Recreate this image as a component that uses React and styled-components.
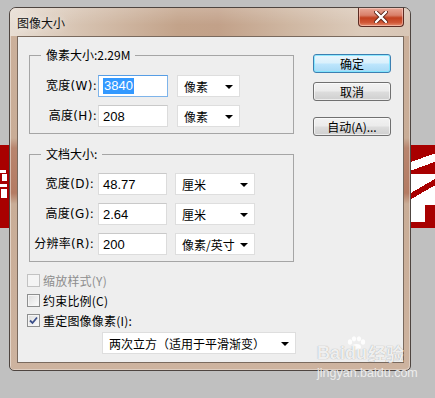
import React from "react";
import styled, { createGlobalStyle } from "styled-components";

const Global = createGlobalStyle`
  html, body { margin: 0; padding: 0; }
  body { font-family: "Noto Sans CJK SC", "Liberation Sans", sans-serif; }
  * { box-sizing: border-box; }
`;

const Page = styled.div`
  position: relative;
  width: 435px;
  height: 398px;
  overflow: hidden;
  padding: 7px 0 0 9px;
  background:
    linear-gradient(#fff, #fff) 0 170px / 6px 3px no-repeat,
    linear-gradient(#fff, #fff) 2px 174px / 5px 7px no-repeat,
    linear-gradient(#fff, #fff) 0 184px / 7px 3px no-repeat,
    linear-gradient(#fff, #fff) 1px 189px / 6px 9px no-repeat,
    linear-gradient(160deg, transparent 30%, #fff 30%, #fff 62%, transparent 62%) 411px 154px / 24px 18px no-repeat,
    linear-gradient(150deg, #fff 0 42%, transparent 42% 56%, #fff 56%) 411px 174px / 24px 31px no-repeat,
    linear-gradient(#fff, #fff) 411px 205px / 14px 17px no-repeat,
    linear-gradient(to bottom, #c0c0c0 145px, #a80000 145px, #a80000 228px, #c0c0c0 228px);
  font-family: "Noto Sans CJK SC", "Liberation Sans", sans-serif;
  font-size: 12px;
  color: #000;
`;

const Window = styled.div`
  width: 402px;
  height: 364px;
  border: 1px solid #4e4540;
  border-radius: 7px 7px 5px 5px;
  overflow: hidden;
  display: flex;
  flex-direction: column;
  background: linear-gradient(to bottom, #ccb19c 0, #c9ad97 130px, #b8856e 140px, #b47b63 185px, #c9ad97 196px, #cdb39f 100%);
  box-shadow: inset 1px 1px 0 rgba(255,255,255,0.45), inset -1px -1px 0 rgba(255,255,255,0.35);
`;

const TitleBar = styled.div`
  height: 28px;
  flex: none;
  display: flex;
  align-items: flex-start;
  justify-content: space-between;
  padding: 0 6px 0 7px;
  background:
    linear-gradient(to bottom, rgba(255,255,255,0.18), rgba(255,255,255,0) 60%),
    linear-gradient(90deg, #e8ded4 0%, #d6c2b0 18%, #c3a38a 42%, #c2a189 52%, #cfb7a2 70%, #dccbbb 88%, #d8c6b6 100%);
`;

const Title = styled.span`
  margin-top: 7px;
  font-size: 12px;
  line-height: 16px;
  color: #111;
  text-shadow: 0 0 6px rgba(255,255,255,0.9);
`;

const CloseButton = styled.div`
  width: 46px;
  height: 19px;
  border: 1px solid #5c2b22;
  border-top: none;
  border-radius: 0 0 4px 4px;
  background: linear-gradient(to bottom, #e9a796 0%, #d9806a 40%, #c2401f 55%, #cf5535 80%, #e58f70 100%);
  display: flex;
  align-items: center;
  justify-content: center;
  box-shadow: inset 0 0 0 1px rgba(255,220,210,0.5);
`;

const Frame = styled.div`
  flex: 1;
  padding: 0 6px 7px 7px;
  display: flex;
`;

const Client = styled.div`
  flex: 1;
  border: 1px solid #7a6a5e;
  background: #eeeeee;
  display: flex;
  padding: 10px 12px 0 11px;
  gap: 19px;
`;

const LeftCol = styled.div`
  width: 265px;
  flex: none;
  display: flex;
  flex-direction: column;
`;

const Group = styled.fieldset`
  margin: ${(p) => p.$mt || 0}px 0 0 0;
  padding: ${(p) => p.$pt}px 0 ${(p) => p.$pb}px 0;
  border: 1px solid #a5a5a5;
  min-width: 0;
`;

const Legend = styled.legend`
  margin-left: 11px;
  padding: 0 5px;
  font-size: 12px;
  line-height: 16px;
`;

const Rows = styled.div`
  display: grid;
  grid-template-columns: ${(p) => p.$cols};
  column-gap: ${(p) => p.$gap}px;
  row-gap: 8px;
  align-items: center;
`;

const Label = styled.span`
  text-align: right;
  font-family: "DejaVu Sans", "Noto Sans CJK SC", sans-serif;
  font-size: 12px;
  letter-spacing: 0.3px;
  line-height: 22px;
  white-space: nowrap;
`;

const Input = styled.div`
  height: 22px;
  background: #fff;
  border: 1px solid ${(p) => (p.$focus ? "#7eb4ea" : "#dcdcdc")};
  border-top-color: ${(p) => (p.$focus ? "#569de5" : "#c9c9c9")};
  padding: 0 0 0 4px;
  display: flex;
  align-items: center;
  font-family: "Liberation Sans", sans-serif;
  font-size: 13px;
`;

const Selected = styled.span`
  background: #3399ff;
  color: #fff;
  line-height: 16px;
  padding: 0 1px;
`;

const Select = styled.div`
  height: 22px;
  width: ${(p) => (p.$w ? `${p.$w}px` : "auto")};
  margin-left: ${(p) => p.$ml || 0}px;
  margin-top: ${(p) => p.$mt || 0}px;
  background: #fff;
  border: 1px solid #dedede;
  display: flex;
  align-items: center;
  justify-content: space-between;
  padding: 0 6px 0 6px;
  font-size: 12px;
`;

const Arrow = styled.span`
  width: 0;
  height: 0;
  border-left: 4px solid transparent;
  border-right: 4px solid transparent;
  border-top: 4px solid #000;
  margin-top: 1px;
`;

const Checks = styled.div`
  margin: 8px 0 0 -2px;
  display: flex;
  flex-direction: column;
`;

const CheckRow = styled.div`
  height: 20px;
  display: flex;
  align-items: center;
  gap: 3px;
  color: ${(p) => (p.$disabled ? "#8d8d8d" : "#000")};
  font-size: 12px;
  letter-spacing: 0.2px;
`;

const Box = styled.span`
  width: 13px;
  height: 13px;
  flex: none;
  border: 1px solid ${(p) => (p.$disabled ? "#c2c2c2" : "#8e8f8f")};
  background: ${(p) =>
    p.$disabled
      ? "#f4f4f4"
      : "linear-gradient(135deg, #dcdcdc 0%, #f0f0f0 60%, #fdfdfd 100%)"};
  box-shadow: inset 0 0 0 1px ${(p) => (p.$disabled ? "#f4f4f4" : "#f5f5f5")};
  display: flex;
  align-items: center;
  justify-content: center;
`;

const ButtonCol = styled.div`
  width: 78px;
  flex: none;
  display: flex;
  flex-direction: column;
  padding-top: 7px;
`;

const Button = styled.div`
  height: 19px;
  margin-top: ${(p) => p.$mt || 0}px;
  border: 1px solid ${(p) => (p.$primary ? "#3c7fb1" : "#707070")};
  border-radius: 3px;
  background: ${(p) =>
    p.$primary
      ? "linear-gradient(to bottom, #eaf6fd 0%, #d9f0fc 48%, #bee6fd 52%, #a7d9f5 100%)"
      : "linear-gradient(to bottom, #f2f2f2 0%, #ebebeb 48%, #dddddd 52%, #cfcfcf 100%)"};
  box-shadow: inset 0 0 0 1px ${(p) => (p.$primary ? "rgba(120,230,255,0.8)" : "rgba(255,255,255,0.6)")};
  display: flex;
  align-items: center;
  justify-content: center;
  font-size: 12px;
  line-height: 16px;
`;

const Watermark = styled.div`
  position: absolute;
  left: 317px;
  top: 336px;
  display: flex;
  flex-direction: column;
  align-items: flex-start;
  pointer-events: none;
`;

const Logo = styled.div`
  display: flex;
  align-items: flex-end;
  color: rgba(255, 255, 255, 0.85);
  font-family: "Liberation Sans", sans-serif;
  font-weight: bold;
  font-size: 18px;
  line-height: 18px;
  text-shadow: 0 0 1px rgba(110,110,110,0.7);
`;

const Paw = styled.span`
  display: inline-flex;
  flex-direction: column;
  align-items: center;
`;

const PawText = styled.span`
  margin-top: -6px;
`;

const LogoCJK = styled.span`
  font-family: "Noto Sans CJK SC", sans-serif;
  font-size: 18px;
  margin-left: 1px;
`;

const Url = styled.div`
  margin-top: 4px;
  color: rgba(240, 240, 240, 0.95);
  font-family: "Liberation Sans", sans-serif;
  font-size: 12.5px;
  line-height: 14px;
`;

const group1 = [
  { label: "宽度(W):", value: "3840", unit: "像素", focus: true },
  { label: "高度(H):", value: "208", unit: "像素" },
];
const group2 = [
  { label: "宽度(D):", value: "48.77", unit: "厘米" },
  { label: "高度(G):", value: "2.64", unit: "厘米" },
  { label: "分辨率(R):", value: "200", unit: "像素/英寸" },
];

function Check() {
  return (
    <svg width="9" height="9" viewBox="0 0 9 9">
      <path d="M1 4.5 L3.5 7 L8 1.5" fill="none" stroke="#3b4f8a" strokeWidth="1.8" />
    </svg>
  );
}

export default function App() {
  return (
    <>
      <Global />
      <Page>
        <Window>
          <TitleBar>
            <Title>图像大小</Title>
            <CloseButton>
              <svg width="14" height="12" viewBox="0 0 14 12">
                <path d="M2 1 L12 11 M12 1 L2 11" stroke="#5a2418" strokeWidth="4" strokeLinecap="round" />
                <path d="M2 1 L12 11 M12 1 L2 11" stroke="#fff" strokeWidth="2.4" strokeLinecap="round" />
              </svg>
            </CloseButton>
          </TitleBar>
          <Frame>
            <Client>
              <LeftCol>
                <Group $pt={12} $pb={6}>
                  <Legend>像素大小:2.29M</Legend>
                  <Rows $cols="67px 70px 71px" $gap={1}>
                    {group1.map((r) => (
                      <React.Fragment key={r.label}>
                        <Label>{r.label}</Label>
                        <Input $focus={r.focus}>
                          {r.focus ? <Selected>{r.value}</Selected> : r.value}
                        </Input>
                        <Select $ml={8}>
                          {r.unit}
                          <Arrow />
                        </Select>
                      </React.Fragment>
                    ))}
                  </Rows>
                </Group>
                <Group $mt={12} $pt={11} $pb={6}>
                  <Legend>文档大小:</Legend>
                  <Rows $cols="64px 69px 84px" $gap={4}>
                    {group2.map((r) => (
                      <React.Fragment key={r.label}>
                        <Label>{r.label}</Label>
                        <Input>{r.value}</Input>
                        <Select $ml={4}>
                          {r.unit}
                          <Arrow />
                        </Select>
                      </React.Fragment>
                    ))}
                  </Rows>
                </Group>
                <Checks>
                  <CheckRow $disabled>
                    <Box $disabled />
                    缩放样式(Y)
                  </CheckRow>
                  <CheckRow>
                    <Box />
                    约束比例(C)
                  </CheckRow>
                  <CheckRow>
                    <Box>
                      <Check />
                    </Box>
                    重定图像像素(I):
                  </CheckRow>
                </Checks>
                <Select $ml={73} $w={194} $mt={2}>
                  两次立方（适用于平滑渐变）
                  <Arrow />
                </Select>
              </LeftCol>
              <ButtonCol>
                <Button $primary>确定</Button>
                <Button $mt={9}>取消</Button>
                <Button $mt={16}>自动(A)...</Button>
              </ButtonCol>
            </Client>
          </Frame>
        </Window>
        <Watermark>
          <Logo>
            Bai
            <Paw>
              <svg width="20" height="14" viewBox="0 0 20 14">
                <g fill="rgba(255,255,255,0.85)">
                  <ellipse cx="4" cy="6" rx="2.2" ry="2.8" />
                  <ellipse cx="8" cy="2.8" rx="2.2" ry="2.6" />
                  <ellipse cx="13" cy="2.8" rx="2.2" ry="2.6" />
                  <ellipse cx="17" cy="6" rx="2.2" ry="2.8" />
                  <ellipse cx="10.5" cy="11" rx="4.5" ry="3" />
                </g>
              </svg>
              <PawText>du</PawText>
            </Paw>
            <LogoCJK>经验</LogoCJK>
          </Logo>
          <Url>jingyan.baidu.com</Url>
        </Watermark>
      </Page>
    </>
  );
}
